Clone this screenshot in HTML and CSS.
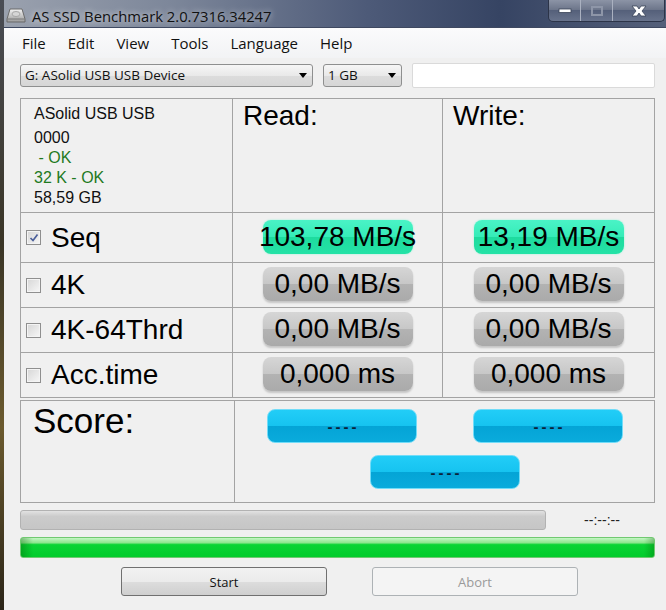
FILE: index.html
```html
<!DOCTYPE html>
<html lang="en">
<head>
  <meta charset="UTF-8" />
  <title>AS SSD Benchmark</title>
  <link rel="stylesheet" href="styles.css">
</head>
<body>
  <div class="window">
    <!-- TITLE BAR -->
    <div class="titlebar">
      <div class="title">
        <svg class="app-icon" width="20" height="16" viewBox="0 0 20 16">
          <defs>
            <linearGradient id="drive" x1="0" y1="0" x2="0" y2="1">
              <stop offset="0" stop-color="#f4f4f4"/>
              <stop offset="1" stop-color="#9a9a9a"/>
            </linearGradient>
          </defs>
          <path d="M4 1 H16 L19 11 V14 H1 V11 Z" fill="url(#drive)" stroke="#6a6a6a" stroke-width="1"/>
          <path d="M1 11 H19" stroke="#7a7a7a" stroke-width="1"/>
          <ellipse cx="10" cy="6" rx="4" ry="2.5" fill="#d6d6d6" stroke="#9c9c9c" stroke-width="0.8"/>
        </svg>
        <span>AS SSD Benchmark 2.0.7316.34247</span>
      </div>
      <div class="win-buttons">
        <span class="win-btn">
          <svg width="14" height="6" viewBox="0 0 14 6"><rect x="1" y="1" width="12" height="3.5" fill="#fff" stroke="#3a4458" stroke-width="0.8"/></svg>
        </span>
        <span class="win-btn">
          <svg width="12" height="10" viewBox="0 0 12 10"><rect x="1" y="1" width="10" height="8" fill="none" stroke="#8e96a8" stroke-width="2"/></svg>
        </span>
        <span class="win-btn close">
          <svg width="18" height="12" viewBox="0 0 18 12"><path d="M2 1 L7 1 L9 4 L11 1 L16 1 L12 6 L16 11 L11 11 L9 8 L7 11 L2 11 L6 6 Z" fill="#fff" stroke="#3a4458" stroke-width="0.8"/></svg>
        </span>
      </div>
    </div>

    <div class="client">
      <!-- MENU -->
      <ul class="menu">
        <li>File</li>
        <li>Edit</li>
        <li>View</li>
        <li>Tools</li>
        <li>Language</li>
        <li>Help</li>
      </ul>

      <!-- DRIVE / SIZE SELECTION -->
      <div class="toolbar">
        <div class="combo device">G: ASolid USB USB Device <span class="arrow"></span></div>
        <div class="combo size">1 GB <span class="arrow"></span></div>
        <div class="textbox"></div>
      </div>

      <!-- RESULTS TABLE -->
      <div class="results">
        <div class="cell info">
          <div class="info-name">ASolid USB USB</div>
          <div>0000</div>
          <div class="ok"> - OK</div>
          <div class="ok">32 K - OK</div>
          <div>58,59 GB</div>
        </div>
        <div class="cell head">Read:</div>
        <div class="cell head">Write:</div>

        <div class="cell label"><span class="check checked"><svg width="10" height="10" viewBox="0 0 10 10"><path d="M1.5 5 L4 7.5 L8.5 1.5" fill="none" stroke="#4b5f9a" stroke-width="1.7"/></svg></span>Seq</div>
        <div class="cell value"><span class="badge green">103,78 MB/s</span></div>
        <div class="cell value"><span class="badge green">13,19 MB/s</span></div>

        <div class="cell label"><span class="check"></span>4K</div>
        <div class="cell value"><span class="badge grey">0,00 MB/s</span></div>
        <div class="cell value"><span class="badge grey">0,00 MB/s</span></div>

        <div class="cell label"><span class="check"></span>4K-64Thrd</div>
        <div class="cell value"><span class="badge grey">0,00 MB/s</span></div>
        <div class="cell value"><span class="badge grey">0,00 MB/s</span></div>

        <div class="cell label"><span class="check"></span>Acc.time</div>
        <div class="cell value"><span class="badge grey">0,000 ms</span></div>
        <div class="cell value"><span class="badge grey">0,000 ms</span></div>
      </div>

      <!-- SCORE -->
      <div class="score">
        <div class="cell score-label">Score:</div>
        <div class="cell score-values">
          <span class="badge blue">----</span>
          <span class="badge blue">----</span>
          <span class="badge blue total">----</span>
        </div>
      </div>

      <!-- PROGRESS -->
      <div class="progress-row">
        <div class="progress"></div>
        <span class="time">--:--:--</span>
      </div>
      <div class="total-bar"></div>

      <div class="buttons">
        <button class="btn">Start</button>
        <button class="btn disabled">Abort</button>
      </div>
    </div>
  </div>
</body>
</html>
```

FILE: styles.css
```css
/* ==========================
   PAGE & WINDOW
=========================== */
body {
  margin: 0;
  width: 666px;
  height: 610px;
  overflow: hidden;
  background: #f0f0f0;
  font-family: 'Liberation Sans', Arial, sans-serif;
}

.window {
  display: flex;
  flex-direction: column;
  height: 610px;
  border-left: 4px solid #3a3526;
  border-image: linear-gradient(#4a4d55, #3a3526 40%, #6b5a2e 70%, #2a2418) 1;
}

/* ==========================
   TITLE BAR
=========================== */
.titlebar {
  height: 28px;
  display: flex;
  justify-content: space-between;
  align-items: flex-start;
  background: linear-gradient(to right, #9aa1ae 0%, #7d879a 25%, #4d5a78 55%, #364463 75%, #55607a 100%);
  border-bottom: 1px solid #3e4860;
  box-sizing: border-box;
}

.title {
  display: flex;
  align-items: center;
  gap: 6px;
  padding: 6px 0 0 2px;
  font-family: 'Open Sans', sans-serif;
  font-size: 14.8px;
  color: #111;
  text-shadow: 0 0 6px rgba(255, 255, 255, 0.8);
}

.win-buttons {
  display: flex;
  margin-right: 1px;
  border: 1px solid #2c3448;
  border-top: none;
  border-radius: 0 0 5px 5px;
  overflow: hidden;
  background: linear-gradient(#8c94a6, #6a7388 50%, #55607a 50%, #68738c);
}

.win-btn {
  width: 31px;
  height: 21px;
  display: flex;
  justify-content: center;
  align-items: center;
  border-left: 1px solid #aab1c0;
}

.win-btn:first-child {
  border-left: none;
}

.win-btn.close {
  width: 51px;
}

/* ==========================
   CLIENT AREA
=========================== */
.client {
  flex: 1;
  display: flex;
  flex-direction: column;
  padding: 0 11px 0 16px;
}

.menu {
  list-style: none;
  margin: 0 -11px 0 -16px;
  padding: 0 0 0 13px;
  height: 30px;
  display: flex;
  align-items: center;
  background: linear-gradient(#fbfbfc, #f2f3f5);
  font-family: 'Open Sans', sans-serif;
  font-size: 15px;
  color: #111;
}

.menu li {
  padding: 0 5px;
  margin-right: 12px;
}

/* ==========================
   TOOLBAR
=========================== */
.toolbar {
  display: flex;
  align-items: center;
  margin-top: 5px;
  height: 25px;
}

.combo {
  height: 23px;
  box-sizing: border-box;
  border: 1px solid #8e8f8f;
  border-radius: 3px;
  background: linear-gradient(#f6f6f6, #e9e9e9 50%, #dcdcdc 50%, #d6d6d6);
  display: flex;
  align-items: center;
  justify-content: space-between;
  padding: 0 5px 1px 4px;
  font-family: 'Open Sans', sans-serif;
  font-size: 13.5px;
  color: #111;
}

.combo.device {
  width: 293px;
}

.combo.size {
  width: 79px;
  margin-left: 10px;
}

.arrow {
  width: 0;
  height: 0;
  border-left: 4px solid transparent;
  border-right: 4px solid transparent;
  border-top: 5px solid #000;
}

.textbox {
  width: 243px;
  height: 25px;
  box-sizing: border-box;
  margin-left: 10px;
  background: #fff;
  border: 1px solid #dadada;
  border-radius: 2px;
}

/* ==========================
   RESULTS TABLE
=========================== */
.results {
  margin-top: 10px;
  display: grid;
  grid-template-columns: 211px 209px 211px;
  grid-template-rows: 113px 49px 44px 44px 44px;
  gap: 1px;
  padding: 1px;
  background: #a3a3a3;
  width: 635px;
  box-sizing: border-box;
}

.cell {
  background: #f0f0f0;
}

.info {
  padding: 5px 0 0 13px;
  font-size: 16px;
  line-height: 20px;
  color: #111;
}

.info-name {
  margin-bottom: 4px;
}

.ok {
  color: #1f7a1f;
  white-space: pre;
}

.head {
  padding: 1px 0 0 10px;
  font-size: 28px;
  line-height: 32px;
  color: #000;
}

.label {
  display: flex;
  align-items: center;
  padding-left: 5px;
  font-size: 28px;
  color: #000;
}

.check {
  width: 15px;
  height: 15px;
  box-sizing: border-box;
  border: 1px solid #8f8f8f;
  margin-right: 10px;
  background: linear-gradient(135deg, #d6d6d6, #f7f7f7);
  box-shadow: inset 0 0 0 1px #f4f4f4;
  display: flex;
  justify-content: center;
  align-items: center;
}

.value {
  display: flex;
  justify-content: center;
  align-items: center;
  padding-bottom: 2px;
}

/* ==========================
   BADGES
=========================== */
.badge {
  width: 150px;
  height: 34px;
  border-radius: 8px;
  display: flex;
  justify-content: center;
  white-space: nowrap;
  font-size: 28px;
  line-height: 34px;
  color: #000;
  box-sizing: border-box;
}

.badge.green {
  background: linear-gradient(#4af3c6, #35ecb8 50%, #1edb9e 50%, #24e2a6);
  box-shadow: 0 0 2px #8ff4d6;
}

.badge.grey {
  background: linear-gradient(#d6d6d6, #c7c7c7 50%, #b3b3b3 50%, #aaaaaa);
  box-shadow: 0 2px 2px rgba(0, 0, 0, 0.18);
}

.badge.blue {
  background: linear-gradient(#22cdf7, #16c3f0 50%, #04a4d6 50%, #0aabdc);
  border: 1px solid #72dcf8;
  font-size: 15px;
  font-weight: bold;
  letter-spacing: 3px;
  color: #0b2238;
  line-height: 30px;
  padding: 2px 0 0 3px;
}

/* ==========================
   SCORE
=========================== */
.score {
  margin-top: 2px;
  display: grid;
  grid-template-columns: 213px 419px;
  grid-template-rows: 101px;
  gap: 1px;
  padding: 1px;
  background: #a3a3a3;
  width: 635px;
  box-sizing: border-box;
}

.score-label {
  padding: 1px 0 0 12px;
  font-size: 35px;
  line-height: 38px;
  color: #000;
}

.score-values {
  display: grid;
  grid-template-columns: 150px 150px;
  column-gap: 56px;
  row-gap: 12px;
  align-content: start;
  padding: 8px 0 0 32px;
}

.badge.total {
  grid-column: 1 / 3;
  justify-self: center;
}

/* ==========================
   PROGRESS & BUTTONS
=========================== */
.progress-row {
  margin-top: 7px;
  display: flex;
  align-items: center;
  height: 20px;
}

.progress {
  width: 526px;
  height: 20px;
  box-sizing: border-box;
  border: 1px solid #b2b2b2;
  border-radius: 3px;
  background: linear-gradient(#e2e2e2, #cbcbcb 30%, #c6c6c6);
}

.time {
  flex: 1;
  text-align: center;
  font-size: 14px;
  color: #222;
  padding-left: 3px;
}

.total-bar {
  margin-top: 7px;
  width: 635px;
  height: 21px;
  box-sizing: border-box;
  border: 1px solid #71c971;
  border-radius: 3px;
  background:
    linear-gradient(to right, rgba(0, 90, 0, 0.35), rgba(0, 90, 0, 0) 12px, rgba(0, 90, 0, 0) 623px, rgba(0, 90, 0, 0.3)),
    linear-gradient(#c4f6c4, #8de68d 25%, #0ad434 35%, #02cc2c);
}

.buttons {
  margin-top: 9px;
  display: flex;
  gap: 45px;
  padding-left: 101px;
}

.btn {
  width: 206px;
  height: 29px;
  border: 1px solid #707070;
  border-radius: 3px;
  background: linear-gradient(#f2f2f2, #ebebeb 50%, #dddddd 50%, #cfcfcf);
  font-family: 'Open Sans', sans-serif;
  font-size: 13px;
  color: #111;
  padding: 0;
}

.btn.disabled {
  border-color: #adb2b5;
  background: #f4f4f4;
  color: #9a9a9a;
}
```
